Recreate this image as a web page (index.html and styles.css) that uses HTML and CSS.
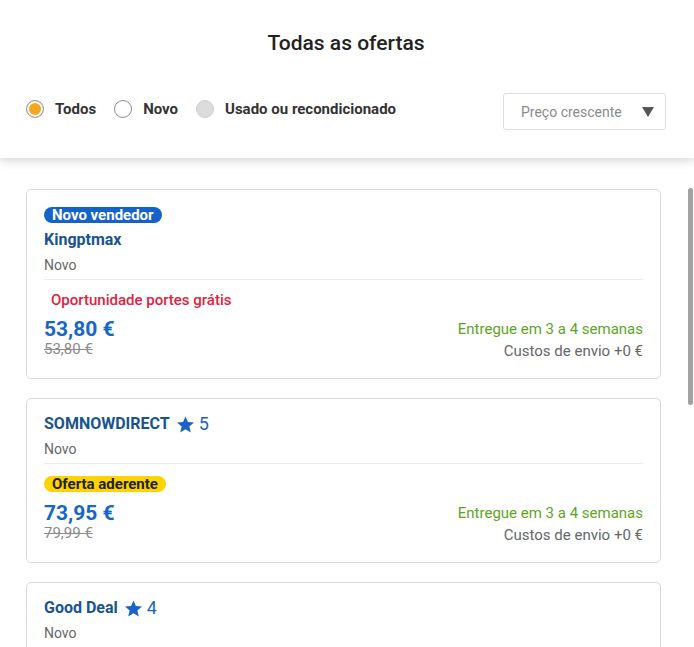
FILE: index.html
```html
<!DOCTYPE html>
<html lang="pt">
<head>
<meta charset="utf-8">
<title>Todas as ofertas</title>
<link rel="stylesheet" href="styles.css">
</head>
<body>
<div class="page">
  <header class="header">
    <h1 class="title">Todas as ofertas</h1>
    <div class="filters">
      <div class="radios">
        <label class="radio-item"><span class="radio radio-checked"></span><span class="radio-text">Todos</span></label>
        <label class="radio-item"><span class="radio"></span><span class="radio-text">Novo</span></label>
        <label class="radio-item"><span class="radio radio-disabled"></span><span class="radio-text">Usado ou recondicionado</span></label>
      </div>
      <div class="select">
        <span class="select-text">Preço crescente</span>
        <span class="select-arrow"></span>
      </div>
    </div>
  </header>

  <main class="list">
    <div class="scroll-thumb"></div>

    <article class="card">
      <div class="badge badge-blue">Novo vendedor</div>
      <div class="seller seller-first"><span class="seller-name">Kingptmax</span></div>
      <div class="condition">Novo</div>
      <div class="divider"></div>
      <div class="offer">
        <div class="offer-left">
          <div class="promo"><span class="promo-red">Oportunidade portes grátis</span></div>
          <div class="price">53,80 €</div>
          <div class="old-price">53,80 €</div>
        </div>
        <div class="offer-right">
          <div class="delivery">Entregue em 3 a 4 semanas</div>
          <div class="shipping">Custos de envio +0 €</div>
        </div>
      </div>
    </article>

    <article class="card">
      <div class="seller"><span class="seller-name">SOMNOWDIRECT</span>
        <span class="rating"><svg class="star" viewBox="0 0 24 24" width="19" height="19"><path d="M12 1.8l3.05 7.1 7.7.65-5.85 5.05 1.78 7.55L12 18.1l-6.68 4.05 1.78-7.55L1.25 9.55l7.7-.65z" fill="#1a63c6"/></svg><span class="rating-num">5</span></span>
      </div>
      <div class="condition">Novo</div>
      <div class="divider"></div>
      <div class="offer">
        <div class="offer-left">
          <div class="promo"><span class="badge badge-yellow">Oferta aderente</span></div>
          <div class="price">73,95 €</div>
          <div class="old-price">79,99 €</div>
        </div>
        <div class="offer-right">
          <div class="delivery">Entregue em 3 a 4 semanas</div>
          <div class="shipping">Custos de envio +0 €</div>
        </div>
      </div>
    </article>

    <article class="card card-last">
      <div class="seller"><span class="seller-name">Good Deal</span>
        <span class="rating"><svg class="star" viewBox="0 0 24 24" width="19" height="19"><path d="M12 1.8l3.05 7.1 7.7.65-5.85 5.05 1.78 7.55L12 18.1l-6.68 4.05 1.78-7.55L1.25 9.55l7.7-.65z" fill="#1a63c6"/></svg><span class="rating-num">4</span></span>
      </div>
      <div class="condition">Novo</div>
      <div class="divider"></div>
    </article>
  </main>
</div>
</body>
</html>
```

FILE: styles.css
```css
html, body {
  margin: 0;
  padding: 0;
}

body {
  font-family: Roboto, "Liberation Sans", Arial, sans-serif;
  background: #ffffff;
  color: #333333;
}

.page {
  display: flex;
  flex-direction: column;
  height: 647px;
  overflow: hidden;
}

.header {
  flex: none;
  height: 158px;
  box-sizing: border-box;
  padding: 31px 28px 0 26px;
  background: #ffffff;
  box-shadow: 0 3px 9px rgba(0, 0, 0, 0.16);
  position: relative;
  z-index: 2;
}

.title {
  margin: 0;
  text-align: center;
  font-size: 21px;
  line-height: 24px;
  font-weight: 500;
  color: #222222;
}

.filters {
  margin-top: 38px;
  display: flex;
  align-items: center;
  justify-content: space-between;
}

.radios {
  display: flex;
  align-items: center;
  margin-top: -6px;
}

.radio-item {
  display: flex;
  align-items: center;
  gap: 11px;
  margin-right: 18px;
}

.radio {
  width: 18px;
  height: 18px;
  box-sizing: border-box;
  border: 1px solid #8e8e8e;
  border-radius: 50%;
  background: #ffffff;
}

.radio-checked {
  background: #f5a623;
  box-shadow: inset 0 0 0 2px #ffffff;
  border-color: #999999;
}

.radio-disabled {
  background: #dcdcdc;
  border-color: #cfcfcf;
}

.radio-text {
  font-size: 15px;
  font-weight: 700;
  color: #333333;
  line-height: 18px;
}

.select {
  width: 163px;
  height: 37px;
  box-sizing: border-box;
  border: 1px solid #dddddd;
  border-radius: 3px;
  display: flex;
  align-items: center;
  justify-content: space-between;
  padding: 0 11px 0 17px;
}

.select-text {
  font-size: 14px;
  color: #8a8a8a;
}

.select-arrow {
  width: 0;
  height: 0;
  border-left: 6px solid transparent;
  border-right: 6px solid transparent;
  border-top: 10px solid #555555;
}

.list {
  flex: 1;
  overflow: hidden;
  padding: 31px 33px 40px 26px;
  position: relative;
  z-index: 1;
}

.scroll-thumb {
  position: absolute;
  top: 30px;
  right: 1px;
  width: 5px;
  height: 217px;
  border-radius: 3px;
  background: #a2a2a2;
}

.card {
  border: 1px solid #dadada;
  border-radius: 5px;
  padding: 15px 17px 16px 17px;
  margin-bottom: 19px;
  background: #ffffff;
}

.card-last {
  padding-bottom: 60px;
}

.badge {
  display: inline-block;
  font-size: 15px;
  font-weight: 700;
  line-height: 16px;
  padding: 0 8px;
  border-radius: 8px;
}

.badge-blue {
  margin-top: 2px;
  background: #1663c7;
  color: #ffffff;
  display: block;
  width: max-content;
}

.badge-yellow {
  background: #fdd400;
  color: #222222;
}

.seller {
  display: flex;
  align-items: center;
  line-height: 20px;
  height: 20px;
}

.seller-first {
  margin-top: 7px;
}

.seller-name {
  font-size: 16px;
  font-weight: 700;
  color: #18548f;
}

.rating {
  display: flex;
  align-items: center;
  margin-left: 6px;
  color: #1a63c6;
  font-size: 18px;
}

.star {
  display: block;
  margin-right: 4px;
}

.condition {
  margin-top: 5px;
  font-size: 14px;
  line-height: 20px;
  color: #666666;
}

.divider {
  margin-top: 4px;
  height: 1px;
  background: #ececec;
}

.offer {
  display: flex;
  justify-content: space-between;
  align-items: flex-end;
}

.offer-left {
  margin-bottom: 5px;
}

.promo {
  margin-top: 10px;
  line-height: 20px;
  height: 20px;
  display: flex;
  align-items: center;
}

.promo-red {
  padding-left: 7px;
  font-size: 15px;
  font-weight: 500;
  color: #e2223c;
}

.price {
  margin-top: 7px;
  font-size: 21px;
  line-height: 24px;
  font-weight: 700;
  color: #1766c6;
}

.old-price {
  font-size: 15px;
  line-height: 16px;
  color: #8a8a8a;
  text-decoration: line-through;
}

.offer-right {
  text-align: right;
  font-size: 15px;
  line-height: 22px;
}

.delivery {
  color: #5da51e;
}

.shipping {
  color: #666666;
}
```
